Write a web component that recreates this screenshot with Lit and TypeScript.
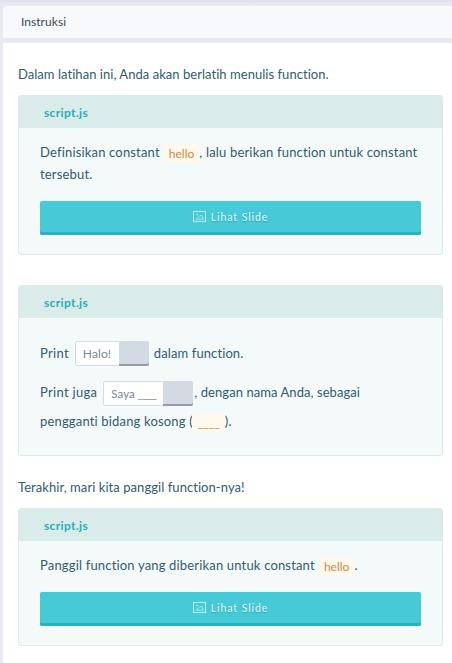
import { LitElement, html, css } from "lit";
import { customElement, property } from "lit/decorators.js";

@customElement("slide-button")
class SlideButton extends LitElement {
  static styles = css`
    :host { display: block; margin-top: 15px; }
    .btn {
      display: flex; align-items: center; justify-content: center; gap: 5px;
      box-sizing: border-box; width: 100%; height: 34px; padding: 0 0 3px;
      border: 0; border-radius: 2px; background: #46cad7;
      box-shadow: inset 0 -3px #2bb1bf;
      color: #e6fafa; font: 10.5px/16px Lato, sans-serif; letter-spacing: 0.92px;
      text-shadow: 0 1px 1px rgba(0, 90, 110, 0.35);
    }
    svg { display: block; }
  `;
  render() {
    return html`<button class="btn">
      <svg width="13" height="11" viewBox="0 0 13 11" fill="none" stroke="#bdeff1">
        <rect x="0.5" y="0.5" width="12" height="10" />
        <path d="M2.7 8.2h8M3.8 7.4l1.9-1.6M6.3 5.3L8.4 4.2l1.2 1.4 .6 2" stroke-width="0.9" />
        <circle cx="4.2" cy="3.6" r="0.8" fill="#bdeff1" stroke="none" />
      </svg>
      <span>Lihat Slide</span>
    </button>`;
  }
}

@customElement("script-card")
class ScriptCard extends LitElement {
  @property() name = "script.js";
  static styles = css`
    :host {
      display: block; box-sizing: border-box; border: 1px solid #d9ecea;
      border-radius: 3px; background: #f4fafa; overflow: hidden;
    }
    .head {
      height: 32px; padding-left: 25px; background: #d9ecea; color: #29adb6;
      font-weight: 700; font-size: 12px; line-height: 33px; letter-spacing: 0.35px;
    }
    .body { padding: 14px 21px 19px; }
  `;
  render() {
    return html`<div class="head">${this.name}</div><div class="body"><slot></slot></div>`;
  }
}

@customElement("app-root")
class AppRoot extends LitElement {
  static styles = css`
    :host {
      display: block; box-sizing: border-box; height: 663px; padding: 6px 0 0 3px; overflow: hidden;
      background: linear-gradient(#dee2e8, #e7eaf0 4px);
      font: 13px/22px Lato, sans-serif; color: #315b72; font-variant-ligatures: none;
    }
    .bar {
      height: 32px; padding-left: 18px; border-radius: 4px 0 0 0; background: #f8f9fd;
      color: #3c4a57; font-size: 12px; line-height: 32px; letter-spacing: 0.04px;
    }
    .panel { box-sizing: border-box; height: 620px; margin-top: 5px; padding: 21px 9px 0 15px; background: #fff; }
    .intro, .outro { height: 22px; margin-bottom: 9px; line-height: 20px; white-space: nowrap; letter-spacing: 0.04px; }
    .second { margin-top: 30px; }
    .outro { margin-top: 21px; letter-spacing: 0.06px; }
    .line { display: flex; height: 22px; line-height: 20px; white-space: pre; letter-spacing: 0.17px; }
    .code {
      box-sizing: border-box; height: 19px; margin: 2px 0 0 0.6px; padding: 0 5px; border-radius: 4px;
      background: #fef8ed; color: #cf8a3e; font-size: 12px; line-height: 19px; letter-spacing: 0;
    }
    .blank { margin-left: -1px; padding: 0 5px 0 6px; }
    .exercise { padding: 9px 0 3px; }
    .field { height: 25px; line-height: 25px; margin-bottom: 15px; letter-spacing: 0.1px; }
    .field.tight { margin-bottom: 5px; line-height: 23px; }
    .tight > span { letter-spacing: 0.07px; }
    .field > .lead { letter-spacing: 0.3px; }
    .chip {
      display: flex; flex: none; box-sizing: border-box; height: 25px; margin: 0 5px 0 6px;
      border: 1px solid #d2dae2; border-radius: 2px; background: #fff; color: #7b8599;
      font-size: 12px; line-height: 24px; letter-spacing: 0.1px;
    }
    .val { box-sizing: border-box; padding-left: 7px; width: 43px; }
    .wide { margin-right: 1px; font-size: 11.5px; }
    .wide .val { width: 59px; }
    .gap { letter-spacing: -0.7px; }
    .copy { width: 30px; margin: -1px -1px -1px 0; background: #d2dae2; box-shadow: inset 0 -2px #929bb0; border-radius: 0 2px 2px 0; }
  `;
  render() {
    return html`
      <div class="bar">Instruksi</div>
      <div class="panel">
        <div class="intro">Dalam latihan ini, Anda akan berlatih menulis function.</div>
        <script-card>
          <div class="line"><span>Definisikan constant </span><span class="code">hello</span><span>, lalu berikan function untuk constant</span></div>
          <div class="line">tersebut.</div>
          <slide-button></slide-button>
        </script-card>
        <script-card class="second">
          <div class="exercise">
            <div class="line field"><span class="lead">Print</span><span class="chip"><span class="val">Halo!</span><span class="copy"></span></span><span>dalam function.</span></div>
            <div class="line field tight"><span class="lead">Print juga</span><span class="chip wide"><span class="val">Saya <span class="gap">____</span></span><span class="copy"></span></span><span>, dengan nama Anda, sebagai</span></div>
            <div class="line"><span>pengganti bidang kosong (</span><span class="code blank">____</span><span>).</span></div>
          </div>
        </script-card>
        <div class="outro">Terakhir, mari kita panggil function-nya!</div>
        <script-card>
          <div class="line"><span>Panggil function yang diberikan untuk constant </span><span class="code">hello</span><span>.</span></div>
          <slide-button></slide-button>
        </script-card>
      </div>`;
  }
}
